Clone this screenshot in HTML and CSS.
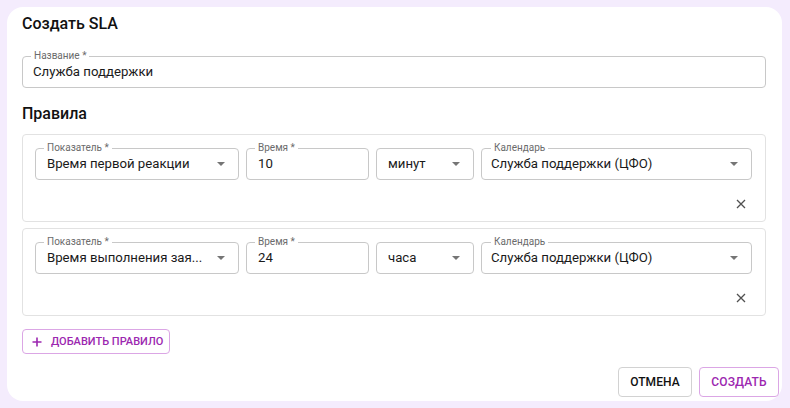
FILE: index.html
```html
<!DOCTYPE html>
<html lang="ru">
<head>
<meta charset="utf-8">
<title>Создать SLA</title>
<link rel="stylesheet" href="styles.css">
</head>
<body>
<div class="dialog">
  <h2 class="title">Создать SLA</h2>
  <div class="field name-field">
    <span class="label">Название *</span>
    <span class="value">Служба поддержки</span>
  </div>
  <h3 class="section">Правила</h3>
  <div class="rules">
    <div class="rule">
      <div class="row">
        <div class="field select">
          <span class="label">Показатель *</span>
          <span class="value">Время первой реакции</span>
          <svg class="arrow" width="8" height="4" viewBox="0 0 8 4"><polygon points="0,0 8,0 4,4"/></svg>
        </div>
        <div class="field">
          <span class="label">Время *</span>
          <span class="value">10</span>
        </div>
        <div class="field select">
          <span class="value">минут</span>
          <svg class="arrow" width="8" height="4" viewBox="0 0 8 4"><polygon points="0,0 8,0 4,4"/></svg>
        </div>
        <div class="field select">
          <span class="label">Календарь</span>
          <span class="value">Служба поддержки (ЦФО)</span>
          <svg class="arrow" width="8" height="4" viewBox="0 0 8 4"><polygon points="0,0 8,0 4,4"/></svg>
        </div>
      </div>
      <div class="rule-actions">
        <button class="icon-btn" aria-label="Удалить">
          <svg width="10" height="10" viewBox="0 0 10 10"><path d="M1 1L9 9M9 1L1 9"/></svg>
        </button>
      </div>
    </div>
    <div class="rule">
      <div class="row">
        <div class="field select">
          <span class="label">Показатель *</span>
          <span class="value" title="Время выполнения заявки">Время выполнения зая...</span>
          <svg class="arrow" width="8" height="4" viewBox="0 0 8 4"><polygon points="0,0 8,0 4,4"/></svg>
        </div>
        <div class="field">
          <span class="label">Время *</span>
          <span class="value">24</span>
        </div>
        <div class="field select">
          <span class="value">часа</span>
          <svg class="arrow" width="8" height="4" viewBox="0 0 8 4"><polygon points="0,0 8,0 4,4"/></svg>
        </div>
        <div class="field select">
          <span class="label">Календарь</span>
          <span class="value">Служба поддержки (ЦФО)</span>
          <svg class="arrow" width="8" height="4" viewBox="0 0 8 4"><polygon points="0,0 8,0 4,4"/></svg>
        </div>
      </div>
      <div class="rule-actions">
        <button class="icon-btn" aria-label="Удалить">
          <svg width="10" height="10" viewBox="0 0 10 10"><path d="M1 1L9 9M9 1L1 9"/></svg>
        </button>
      </div>
    </div>
  </div>
  <div class="add-row">
    <button class="add-btn">
      <svg width="10" height="10" viewBox="0 0 10 10"><path d="M5 0.5V9.5M0.5 5H9.5"/></svg>
      <span>Добавить правило</span>
    </button>
  </div>
  <div class="footer">
    <button class="btn cancel">Отмена</button>
    <button class="btn create">Создать</button>
  </div>
</div>
</body>
</html>
```

FILE: styles.css
```css
* { box-sizing: border-box; }

html, body {
  margin: 0;
  height: 100%;
}

body {
  background: #f4ecfd;
  padding: 7px 8px 7px 7px;
  font-family: Roboto, "Noto Sans", "Liberation Sans", sans-serif;
  color: rgba(0, 0, 0, 0.87);
}

.dialog {
  background: #ffffff;
  border-radius: 16px;
  height: 394px;
  padding: 7px 16px 0 15px;
  display: flex;
  flex-direction: column;
}

.title {
  margin: 0;
  font-size: 16px;
  line-height: 20px;
  font-weight: 500;
  color: #111;
}

.section {
  margin: 16px 0 0;
  font-size: 16px;
  line-height: 20px;
  font-weight: 500;
  color: #111;
}

.field {
  position: relative;
  height: 32px;
  border: 1px solid #c8c8c8;
  border-radius: 4px;
  display: flex;
  align-items: center;
  padding: 0 13px 0 11px;
  min-width: 0;
}

.name-field {
  margin-top: 22px;
  padding-left: 10px;
}

.label {
  position: absolute;
  top: -7px;
  left: 8px;
  padding: 0 3px;
  background: #fff;
  font-size: 10px;
  line-height: 12px;
  color: #6b6b6b;
  white-space: nowrap;
}

.value {
  font-size: 13.2px;
  line-height: 18px;
  color: #1a1a1a;
  white-space: nowrap;
  overflow: hidden;
  min-width: 0;
  flex: 1;
}

.select .value {
  padding-right: 12px;
}

.arrow {
  flex: none;
  fill: #757575;
}

.rules {
  margin-top: 10px;
  display: flex;
  flex-direction: column;
  gap: 6px;
}

.rule {
  border: 1px solid #e2e2e2;
  border-radius: 4px;
  padding: 13px 13px 5px 12px;
}

.row {
  display: grid;
  grid-template-columns: 204px 123px 98px 1fr;
  column-gap: 7px;
}

.row .field:last-child {
  padding-left: 9px;
}

.row .field:last-child .label {
  left: 9px;
}

.rule-actions {
  display: flex;
  justify-content: flex-end;
  margin-top: 12px;
}

.icon-btn {
  width: 24px;
  height: 24px;
  border: none;
  background: none;
  padding: 0;
  display: flex;
  align-items: center;
  justify-content: center;
  margin-right: -1px;
}

.icon-btn svg {
  stroke: #505050;
  stroke-width: 1.3;
  fill: none;
}

.add-row {
  margin-top: 13px;
  display: flex;
}

.add-btn {
  height: 25px;
  width: 148px;
  border: 1px solid #dba6e5;
  border-radius: 4px;
  background: #fff;
  display: flex;
  align-items: center;
  gap: 9px;
  padding: 0 0 0 9px;
  color: #9c27b0;
  font-family: Roboto, "Noto Sans", "Liberation Sans", sans-serif;
  font-size: 11px;
  font-weight: 500;
  letter-spacing: 0;
  text-transform: uppercase;
  white-space: nowrap;
}

.add-btn svg {
  stroke: #9c27b0;
  stroke-width: 1.6;
  fill: none;
  flex: none;
}

.footer {
  margin-top: 13px;
  margin-right: -13px;
  display: flex;
  justify-content: flex-end;
  gap: 7px;
}

.btn {
  height: 30px;
  border-radius: 4px;
  background: #fff;
  font-family: Roboto, "Noto Sans", "Liberation Sans", sans-serif;
  font-size: 12px;
  font-weight: 500;
  letter-spacing: 0.1px;
  text-transform: uppercase;
  padding: 0;
}

.cancel {
  width: 74px;
  border: 1px solid #d2d2d2;
  color: #111;
}

.create {
  width: 80px;
  border: 1px solid #dba6e5;
  color: #9c27b0;
}
```
